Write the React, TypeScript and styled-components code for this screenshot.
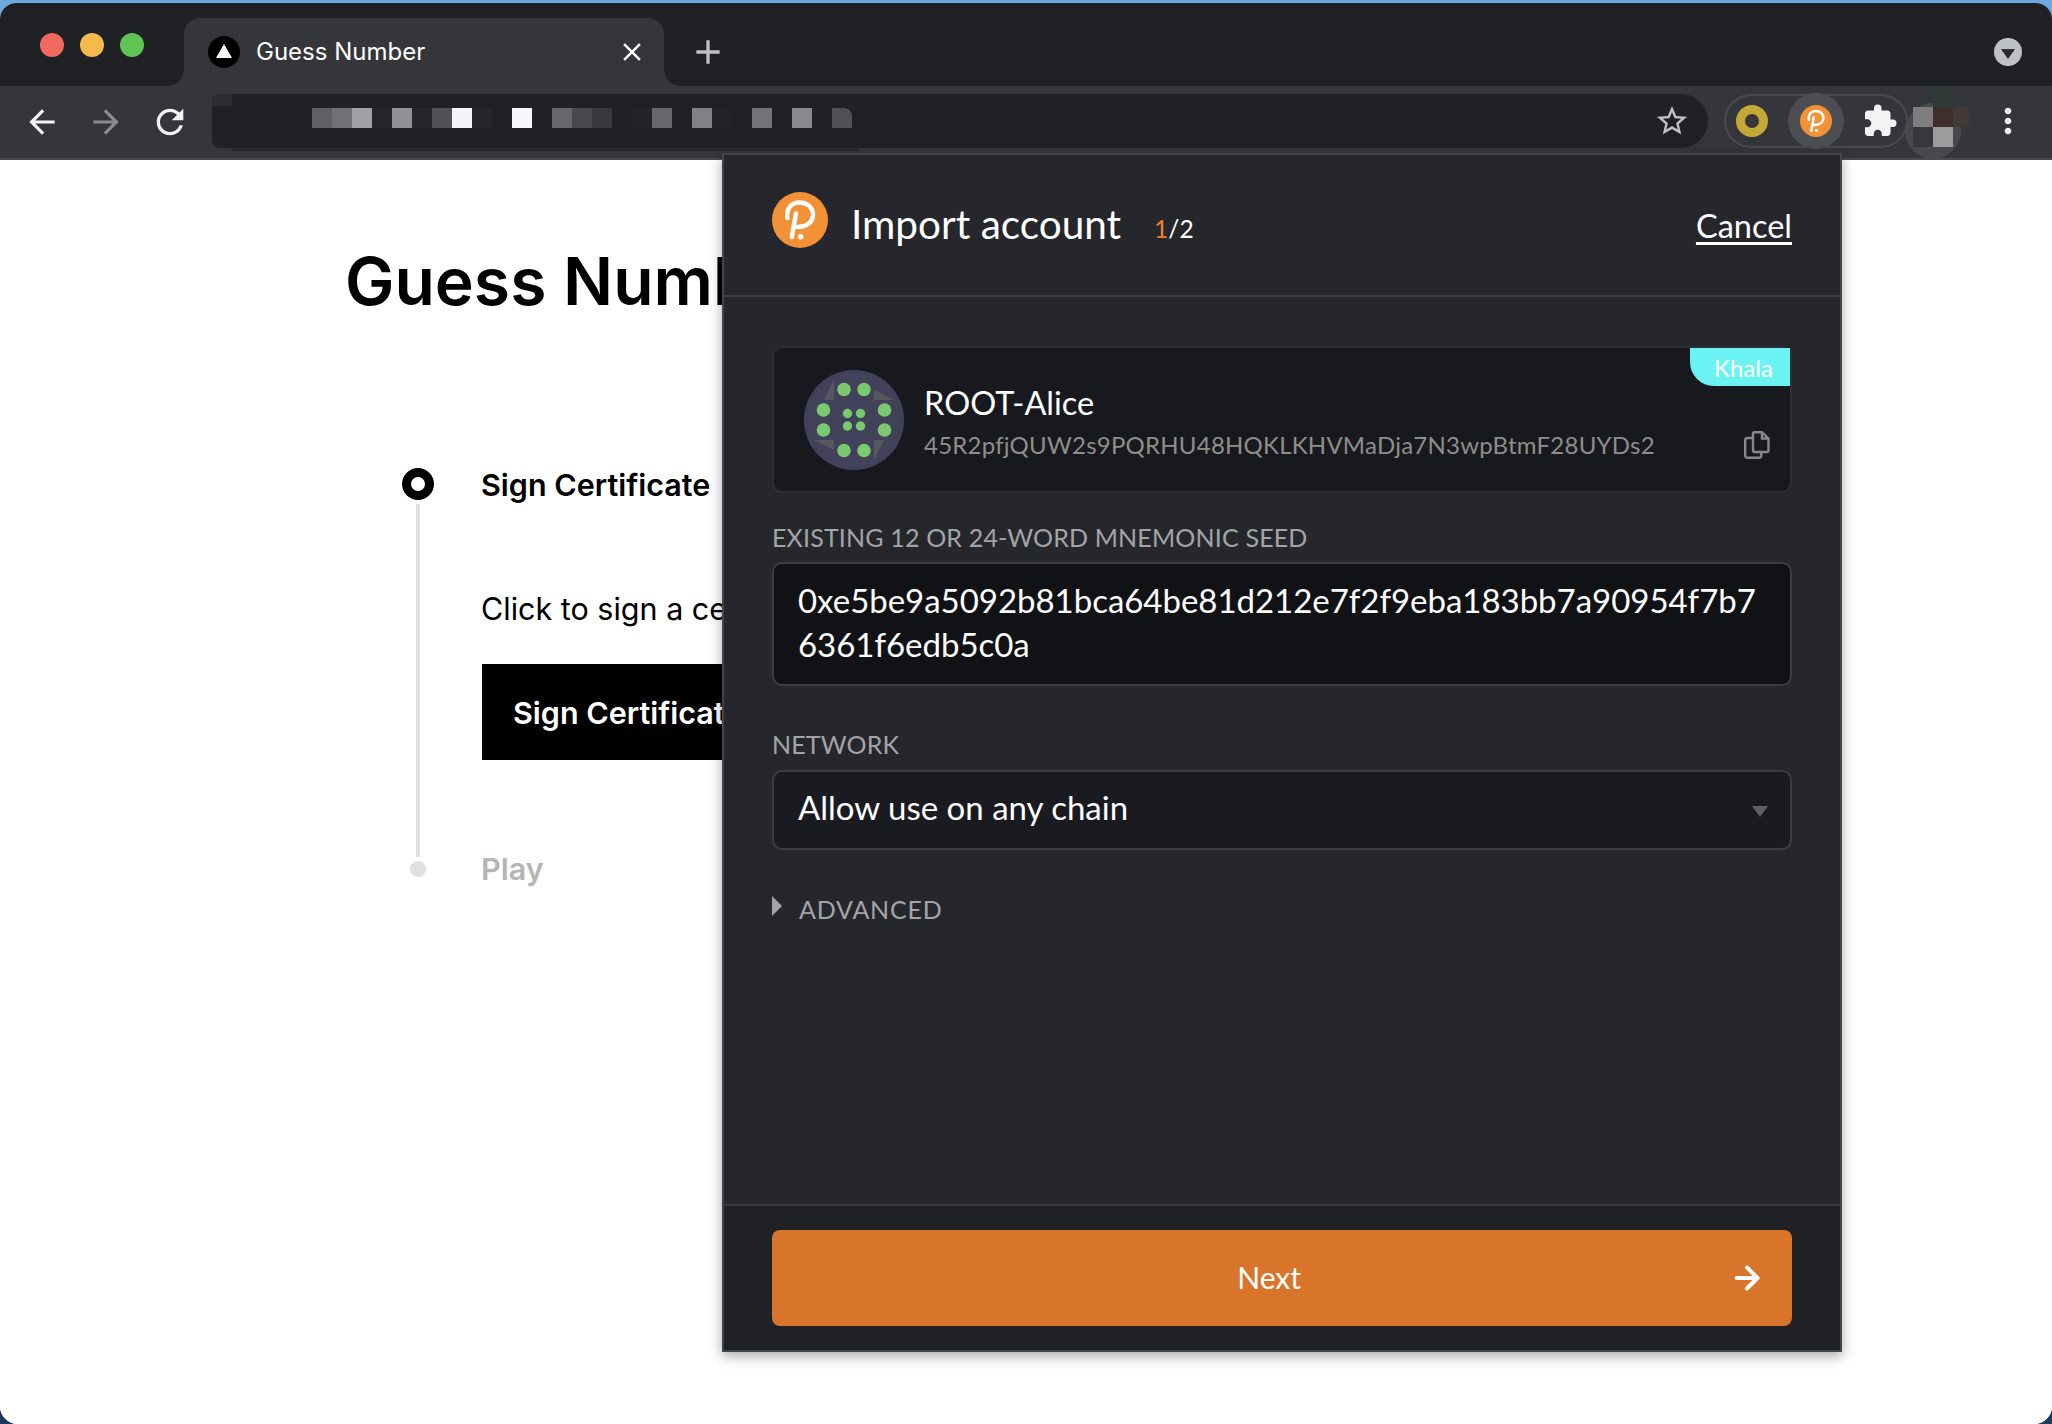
import React from 'react';
import styled, { createGlobalStyle } from 'styled-components';
import {
  MdAdd,
  MdArrowBack,
  MdArrowForward,
  MdClose,
  MdExtension,
  MdMoreVert,
  MdRefresh,
  MdStarBorder,
} from 'react-icons/md';
import { FiArrowRight } from 'react-icons/fi';

const GlobalStyle = createGlobalStyle`
  html, body {
    margin: 0;
    padding: 0;
    height: 100%;
    overflow: hidden;
    background: linear-gradient(#6ea8e0 0 50%, #1c3a5e 50%);
  }
  * {
    box-sizing: border-box;
  }
`;

const popupFont = `Lato, "Noto Sans", sans-serif`;
const pageFont = `Inter, "Liberation Sans", sans-serif`;

const Window = styled.div`
  position: relative;
  width: 2052px;
  height: 1421px;
  margin-top: 3px;
  display: flex;
  flex-direction: column;
  overflow: hidden;
  border-radius: 16px 16px 18px 18px;
  background: #fff;
`;

const TabStrip = styled.div`
  height: 83px;
  display: flex;
  align-items: flex-end;
  flex-shrink: 0;
  background: #202124;
`;

const TrafficLights = styled.div`
  width: 184px;
  height: 83px;
  padding: 30px 0 0 40px;
  display: flex;
  gap: 16px;
`;

const Light = styled.span<{ $color: string }>`
  width: 24px;
  height: 24px;
  border-radius: 50%;
  background: ${props => props.$color};
`;

const Tab = styled.div`
  position: relative;
  width: 480px;
  height: 68px;
  padding: 0 17px 0 24px;
  display: flex;
  align-items: center;
  border-radius: 16px 16px 0 0;
  background: #35363a;

  &::before,
  &::after {
    content: '';
    position: absolute;
    bottom: 0;
    width: 16px;
    height: 16px;
  }

  &::before {
    left: -16px;
    background: radial-gradient(circle at 0 0, transparent 15.5px, #35363a 16px);
  }

  &::after {
    right: -16px;
    background: radial-gradient(circle at 100% 0, transparent 15.5px, #35363a 16px);
  }
`;

const Favicon = styled.span`
  width: 32px;
  height: 32px;
  flex-shrink: 0;
  display: flex;
  align-items: center;
  justify-content: center;
  border-radius: 50%;
  background: #000;

  &::after {
    content: '';
    border-left: 8px solid transparent;
    border-right: 8px solid transparent;
    border-bottom: 14px solid #fff;
    margin-top: -2px;
  }
`;

const TabTitle = styled.span`
  margin-left: 16px;
  flex: 1;
  font: 400 24px/1 ${pageFont};
  color: #fff;
`;

const TabClose = styled.span`
  display: flex;
  color: #fff;
`;

const NewTab = styled.span`
  height: 68px;
  margin-left: 24px;
  display: flex;
  align-items: center;
  color: #bdc1c6;
`;

const ProfileMenu = styled.span`
  width: 28px;
  height: 28px;
  margin: 0 30px 20px auto;
  align-self: flex-end;
  display: flex;
  align-items: center;
  justify-content: center;
  border-radius: 50%;
  background: #bdc1c6;

  &::after {
    content: '';
    margin-top: 3px;
    border-left: 7px solid transparent;
    border-right: 7px solid transparent;
    border-top: 10px solid #2a2b2f;
  }
`;

const Toolbar = styled.div`
  height: 74px;
  padding: 0 0 2px 10px;
  display: flex;
  align-items: center;
  flex-shrink: 0;
  background: #35363a;
  border-bottom: 2px solid #4a4b4f;
`;

const NavButton = styled.span<{ $dim?: boolean }>`
  width: 64px;
  margin-top: 2px;
  display: flex;
  justify-content: center;
  color: ${props => (props.$dim ? '#8a8b8e' : '#f1f3f4')};
`;

const Omnibox = styled.div`
  position: relative;
  width: 1496px;
  height: 54px;
  margin-left: 10px;
  padding: 0 18px 0 100px;
  display: flex;
  align-items: center;
  border-radius: 8px 27px 27px 8px;
  background: #202124;

  /* smudged strip left under the blurred address */
  &::before {
    content: '';
    position: absolute;
    left: 0;
    top: 0;
    width: 20px;
    height: 12px;
    border-top-left-radius: 8px;
    background: #2c2d31;
  }

  &::after {
    content: '';
    position: absolute;
    left: 20px;
    top: 54px;
    width: 626px;
    height: 3px;
    background: #28292d;
  }
`;

const Mosaic = styled.div`
  display: flex;
  margin-bottom: 6px;
`;

const MosaicCell = styled.span<{ $shade: string; $corner?: boolean }>`
  width: 20px;
  height: 20px;
  background: ${props => props.$shade};
  border-top-right-radius: ${props => (props.$corner ? '8px' : '0')};
`;

const Star = styled.span`
  margin-left: auto;
  display: flex;
  color: #bdc1c6;
`;

const ExtensionPill = styled.div`
  width: 184px;
  height: 54px;
  margin-left: 16px;
  display: flex;
  align-items: center;
  gap: 8px;
  border-radius: 27px;
  box-shadow: inset 0 0 0 2px #4a4b4f;
`;

const ExtensionSlot = styled.span<{ $active?: boolean }>`
  width: 56px;
  height: 56px;
  flex-shrink: 0;
  display: flex;
  align-items: center;
  justify-content: center;
  border-radius: 50%;
  color: #f1f3f4;
  background: ${props => (props.$active ? '#4d4e52' : 'transparent')};
`;

const RingIcon = styled.span`
  width: 32px;
  height: 32px;
  border-radius: 50%;
  border: 9px solid #c4a936;
`;

const AccountSlot = styled.div`
  position: relative;
  width: 56px;
  height: 58px;
  margin: 0 0 6px 5px;
  display: grid;
  grid-template-columns: 20px 20px 16px;
  grid-template-rows: 18px 20px 20px;

  &::before {
    content: '';
    position: absolute;
    left: -8px;
    top: 14px;
    width: 56px;
    height: 56px;
    border-radius: 50%;
    background: #48494d;
  }
`;

const AccountCell = styled.span<{ $shade: string }>`
  position: relative;
  background: ${props => props.$shade};
`;

const MenuButton = styled.span`
  width: 78px;
  display: flex;
  justify-content: center;
  color: #f1f3f4;
`;

const Page = styled.main`
  flex: 1;
  padding: 73px 0 0 345px;
  background: #fff;
  color: #000;
  font-family: ${pageFont};
`;

const Heading = styled.h1`
  margin: 0 0 139px;
  font-size: 66px;
  line-height: 96px;
  font-weight: 600;
`;

const Steps = styled.div`
  margin-left: 57px;
  display: flex;
  gap: 47px;
`;

const Rail = styled.div`
  width: 32px;
  padding-bottom: 9px;
  display: flex;
  flex-direction: column;
  align-items: center;
`;

const RailDot = styled.span`
  width: 32px;
  height: 32px;
  flex-shrink: 0;
  border-radius: 50%;
  border: 9px solid #000;
`;

const RailLine = styled.span`
  width: 4px;
  flex: 1;
  margin: 4px 0;
  background: #e0e0e0;
`;

const RailEnd = styled.span`
  width: 16px;
  height: 16px;
  flex-shrink: 0;
  border-radius: 50%;
  background: #e0e0e0;
`;

const StepBody = styled.div`
  display: flex;
  flex-direction: column;
  align-items: flex-start;
`;

const StepTitle = styled.div<{ $muted?: boolean }>`
  font-size: 30.5px;
  line-height: 34px;
  font-weight: 600;
  white-space: nowrap;
  color: ${props => (props.$muted ? '#b5b5b5' : '#000')};
`;

const StepText = styled.p`
  margin: 87px 0 35px;
  font-size: 30.5px;
  line-height: 40px;
  white-space: nowrap;
`;

const SignButton = styled.button`
  height: 96px;
  margin: 0 0 92px 1px;
  padding: 0 31px;
  flex-shrink: 0;
  border: 0;
  background: #000;
  color: #fff;
  font: 600 30.5px ${pageFont};
  white-space: nowrap;
`;

const Popup = styled.section`
  position: absolute;
  left: 722px;
  top: 150px;
  width: 1120px;
  height: 1199px;
  display: flex;
  flex-direction: column;
  border: 2px solid #44454b;
  background: #26272c;
  box-shadow: 0 4px 12px rgba(0, 0, 0, 0.35);
  font-family: ${popupFont};
  color: #fff;
`;

const PopupHeader = styled.header`
  height: 142px;
  padding: 0 48px 10px;
  display: flex;
  align-items: center;
  flex-shrink: 0;
  border-bottom: 2px solid #3c3d43;
`;

const PopupTitle = styled.h2`
  margin: 7px 0 0 23px;
  font-size: 40.5px;
  font-weight: 400;
`;

const StepCount = styled.span`
  margin: 16px 0 0 33px;
  font-size: 24.5px;
`;

const StepCurrent = styled.span`
  color: #ee7f2c;
`;

const CancelLink = styled.a`
  margin: 10px 0 0 auto;
  font-size: 32.5px;
  text-decoration: underline;
  text-underline-offset: 4px;
`;

const PopupBody = styled.div`
  flex: 1;
  padding: 49px 48px 0;
  display: flex;
  flex-direction: column;
`;

const AccountCard = styled.div`
  position: relative;
  height: 147px;
  padding: 0 20px 0 30px;
  display: flex;
  align-items: center;
  border: 2px solid #2e2f35;
  border-radius: 10px;
  background: #18191e;
`;

const ChainBadge = styled.span`
  position: absolute;
  top: 0;
  right: 0;
  width: 100px;
  height: 38px;
  padding-left: 24px;
  display: flex;
  align-items: center;
  border-bottom-left-radius: 24px;
  background: #6bf3f3;
  font-size: 24px;
  color: #fff;
`;

const AccountInfo = styled.div`
  margin: 6px 0 0 20px;
  flex: 1;
`;

const AccountName = styled.div`
  font-size: 32.5px;
  line-height: 40px;
`;

const AccountAddress = styled.div`
  margin-top: 4px;
  font-size: 24px;
  line-height: 36px;
  letter-spacing: 0.23px;
  color: #8e8e8a;
`;

const CopyButton = styled.span`
  align-self: flex-end;
  margin-bottom: 32px;
  display: flex;
`;

const FieldLabel = styled.label`
  display: block;
  margin-top: 29px;
  font-size: 25px;
  line-height: 30px;
  letter-spacing: 0.17px;
  color: #a3a4a8;
`;

const SeedBox = styled.div`
  height: 124px;
  margin-top: 10px;
  padding: 14px 24px;
  border: 2px solid #3c3d43;
  border-radius: 10px;
  background: #111216;
  font-size: 33px;
  line-height: 44px;
  letter-spacing: -0.03px;
  word-break: break-all;
`;

const NetworkLabel = styled(FieldLabel)`
  margin-top: 43px;
`;

const NetworkSelect = styled.div`
  height: 80px;
  margin-top: 11px;
  padding: 0 22px 6px 24px;
  display: flex;
  align-items: center;
  justify-content: space-between;
  border: 2px solid #3c3d43;
  border-radius: 10px;
  background: #1a1b20;
  font-size: 33px;

  &::after {
    content: '';
    margin-top: 9px;
    border-left: 8px solid transparent;
    border-right: 8px solid transparent;
    border-top: 11px solid #5f6064;
  }
`;

const AdvancedRow = styled.div`
  margin-top: 44px;
  display: flex;
  align-items: center;
  gap: 17px;
  font-size: 25px;
  line-height: 30px;
  letter-spacing: 0.8px;
  color: #a3a4a8;

  &::before {
    content: '';
    margin-top: -6px;
    border-top: 10px solid transparent;
    border-bottom: 10px solid transparent;
    border-left: 10px solid #a3a4a8;
  }
`;

const PopupFooter = styled.footer`
  height: 146px;
  padding: 24px 48px;
  flex-shrink: 0;
  border-top: 2px solid #3c3d43;
  background: #202125;
`;

const NextButton = styled.button`
  width: 100%;
  height: 96px;
  padding: 0 27px 0 0;
  display: flex;
  align-items: center;
  justify-content: flex-end;
  border: 0;
  border-radius: 8px;
  background: #d9752b;
  color: #fff;
  font: 400 30px ${popupFont};
`;

const NextLabel = styled.span`
  margin: 0 428px 2px 0;
`;

const PolkadotLogo = ({ size }: { size: number }) => (
  <svg width={size} height={size} viewBox="0 0 56 56" fill="none">
    <circle cx="28" cy="28" r="28" fill="#f29135" />
    <path
      d="M15.5 26C14 16 20 10.5 27.5 10.5C35 10.5 41 15.5 41 22.5C41 30 35 35 25 35M24 21.5L19.8 45"
      stroke="#fff"
      strokeWidth="4.4"
      strokeLinecap="round"
    />
    <circle cx="28.7" cy="44.7" r="2.7" fill="#fff" />
  </svg>
);

const outerDots = [
  [49, 29.5],
  [69, 29.5],
  [28.5, 50],
  [89.5, 50],
  [28.5, 70],
  [89.5, 70],
  [49, 90.5],
  [69, 90.5],
];

const innerDots = [
  [52.5, 53.5],
  [65.5, 53.5],
  [52.5, 66],
  [65.5, 66],
];

const Identicon = () => (
  <svg width="100" height="100" viewBox="9 10 100 100">
    <circle cx="59" cy="60" r="50" fill="#41425a" />
    <path
      d="M39 19L29 40H39ZM79 30L99 40H79ZM19 80H39V90ZM79 80H89L79 100Z"
      fill="#55565e"
    />
    {outerDots.map(([x, y]) => (
      <circle key={`${x}-${y}`} cx={x} cy={y} r="6.8" fill="#7ac86f" />
    ))}
    {innerDots.map(([x, y]) => (
      <circle key={`${x}-${y}`} cx={x} cy={y} r="4.7" fill="#7ac86f" />
    ))}
  </svg>
);

const CopyIcon = () => (
  <svg width="26" height="28" viewBox="0 0 26 28" fill="none" stroke="#87888b" strokeWidth="2.4">
    <path d="M9 2.5C9 1.8 9.6 1.2 10.3 1.2H18L24.5 7.5V19C24.5 20.2 23.6 21 22.5 21H11C9.9 21 9 20.2 9 19Z" />
    <path d="M18 1.2V7.5H24.5" />
    <path d="M9 7H3.5C2.2 7 1.2 8 1.2 9.3V24.5C1.2 25.8 2.2 26.8 3.5 26.8H15C16.3 26.8 17.3 25.8 17.3 24.5V21" />
  </svg>
);

const addressPixels: [string, boolean?][] = [
  ['#5f6165'], ['#6f7175'], ['#9fa1a5'], ['#232528'], ['#8f9195'], ['#25272a'], ['#4f5155'], ['#f5f5f7'],
  ['#242629'], ['#202124'], ['#f5f7fa'], ['#202124'], ['#66686c'], ['#47494d'], ['#36383c'], ['#202124'],
  ['#222427'], ['#66686c'], ['#202124'], ['#808285'], ['#222427'], ['#202124'], ['#727477'], ['#202124'],
  ['#88898c'], ['#202124'], ['#505155', true],
];

const accountPixels = [
  'transparent', '#2f3a38', 'transparent',
  '#7f7d80', '#3f302d', '#413a38',
  '#37383b', '#9c9c9e', 'transparent',
];

const App = () => (
  <Window>
    <GlobalStyle />
    <TabStrip>
      <TrafficLights>
        <Light $color="#f2695f" />
        <Light $color="#f6bb4c" />
        <Light $color="#5fc454" />
      </TrafficLights>
      <Tab>
        <Favicon />
        <TabTitle>Guess Number</TabTitle>
        <TabClose>
          <MdClose size={30} />
        </TabClose>
      </Tab>
      <NewTab>
        <MdAdd size={40} />
      </NewTab>
      <ProfileMenu />
    </TabStrip>
    <Toolbar>
      <NavButton>
        <MdArrowBack size={38} />
      </NavButton>
      <NavButton $dim>
        <MdArrowForward size={38} />
      </NavButton>
      <NavButton>
        <MdRefresh size={40} />
      </NavButton>
      <Omnibox>
        <Mosaic>
          {addressPixels.map(([shade, corner], i) => (
            <MosaicCell key={i} $shade={shade} $corner={corner} />
          ))}
        </Mosaic>
        <Star>
          <MdStarBorder size={36} />
        </Star>
      </Omnibox>
      <ExtensionPill>
        <ExtensionSlot>
          <RingIcon />
        </ExtensionSlot>
        <ExtensionSlot $active>
          <PolkadotLogo size={32} />
        </ExtensionSlot>
        <ExtensionSlot>
          <MdExtension size={36} />
        </ExtensionSlot>
      </ExtensionPill>
      <AccountSlot>
        {accountPixels.map((shade, i) => (
          <AccountCell key={i} $shade={shade} />
        ))}
      </AccountSlot>
      <MenuButton>
        <MdMoreVert size={40} />
      </MenuButton>
    </Toolbar>
    <Page>
      <Heading>Guess Number</Heading>
      <Steps>
        <Rail>
          <RailDot />
          <RailLine />
          <RailEnd />
        </Rail>
        <StepBody>
          <StepTitle>Sign Certificate</StepTitle>
          <StepText>Click to sign a ce</StepText>
          <SignButton>Sign Certificate</SignButton>
          <StepTitle $muted>Play</StepTitle>
        </StepBody>
      </Steps>
    </Page>
    <Popup>
      <PopupHeader>
        <PolkadotLogo size={56} />
        <PopupTitle>Import account</PopupTitle>
        <StepCount>
          <StepCurrent>1</StepCurrent>/2
        </StepCount>
        <CancelLink>Cancel</CancelLink>
      </PopupHeader>
      <PopupBody>
        <AccountCard>
          <ChainBadge>Khala</ChainBadge>
          <Identicon />
          <AccountInfo>
            <AccountName>ROOT-Alice</AccountName>
            <AccountAddress>45R2pfjQUW2s9PQRHU48HQKLKHVMaDja7N3wpBtmF28UYDs2</AccountAddress>
          </AccountInfo>
          <CopyButton>
            <CopyIcon />
          </CopyButton>
        </AccountCard>
        <FieldLabel>EXISTING 12 OR 24-WORD MNEMONIC SEED</FieldLabel>
        <SeedBox>0xe5be9a5092b81bca64be81d212e7f2f9eba183bb7a90954f7b76361f6edb5c0a</SeedBox>
        <NetworkLabel>NETWORK</NetworkLabel>
        <NetworkSelect>Allow use on any chain</NetworkSelect>
        <AdvancedRow>ADVANCED</AdvancedRow>
      </PopupBody>
      <PopupFooter>
        <NextButton>
          <NextLabel>Next</NextLabel>
          <FiArrowRight size={36} strokeWidth={2.6} />
        </NextButton>
      </PopupFooter>
    </Popup>
  </Window>
);

export default App;
